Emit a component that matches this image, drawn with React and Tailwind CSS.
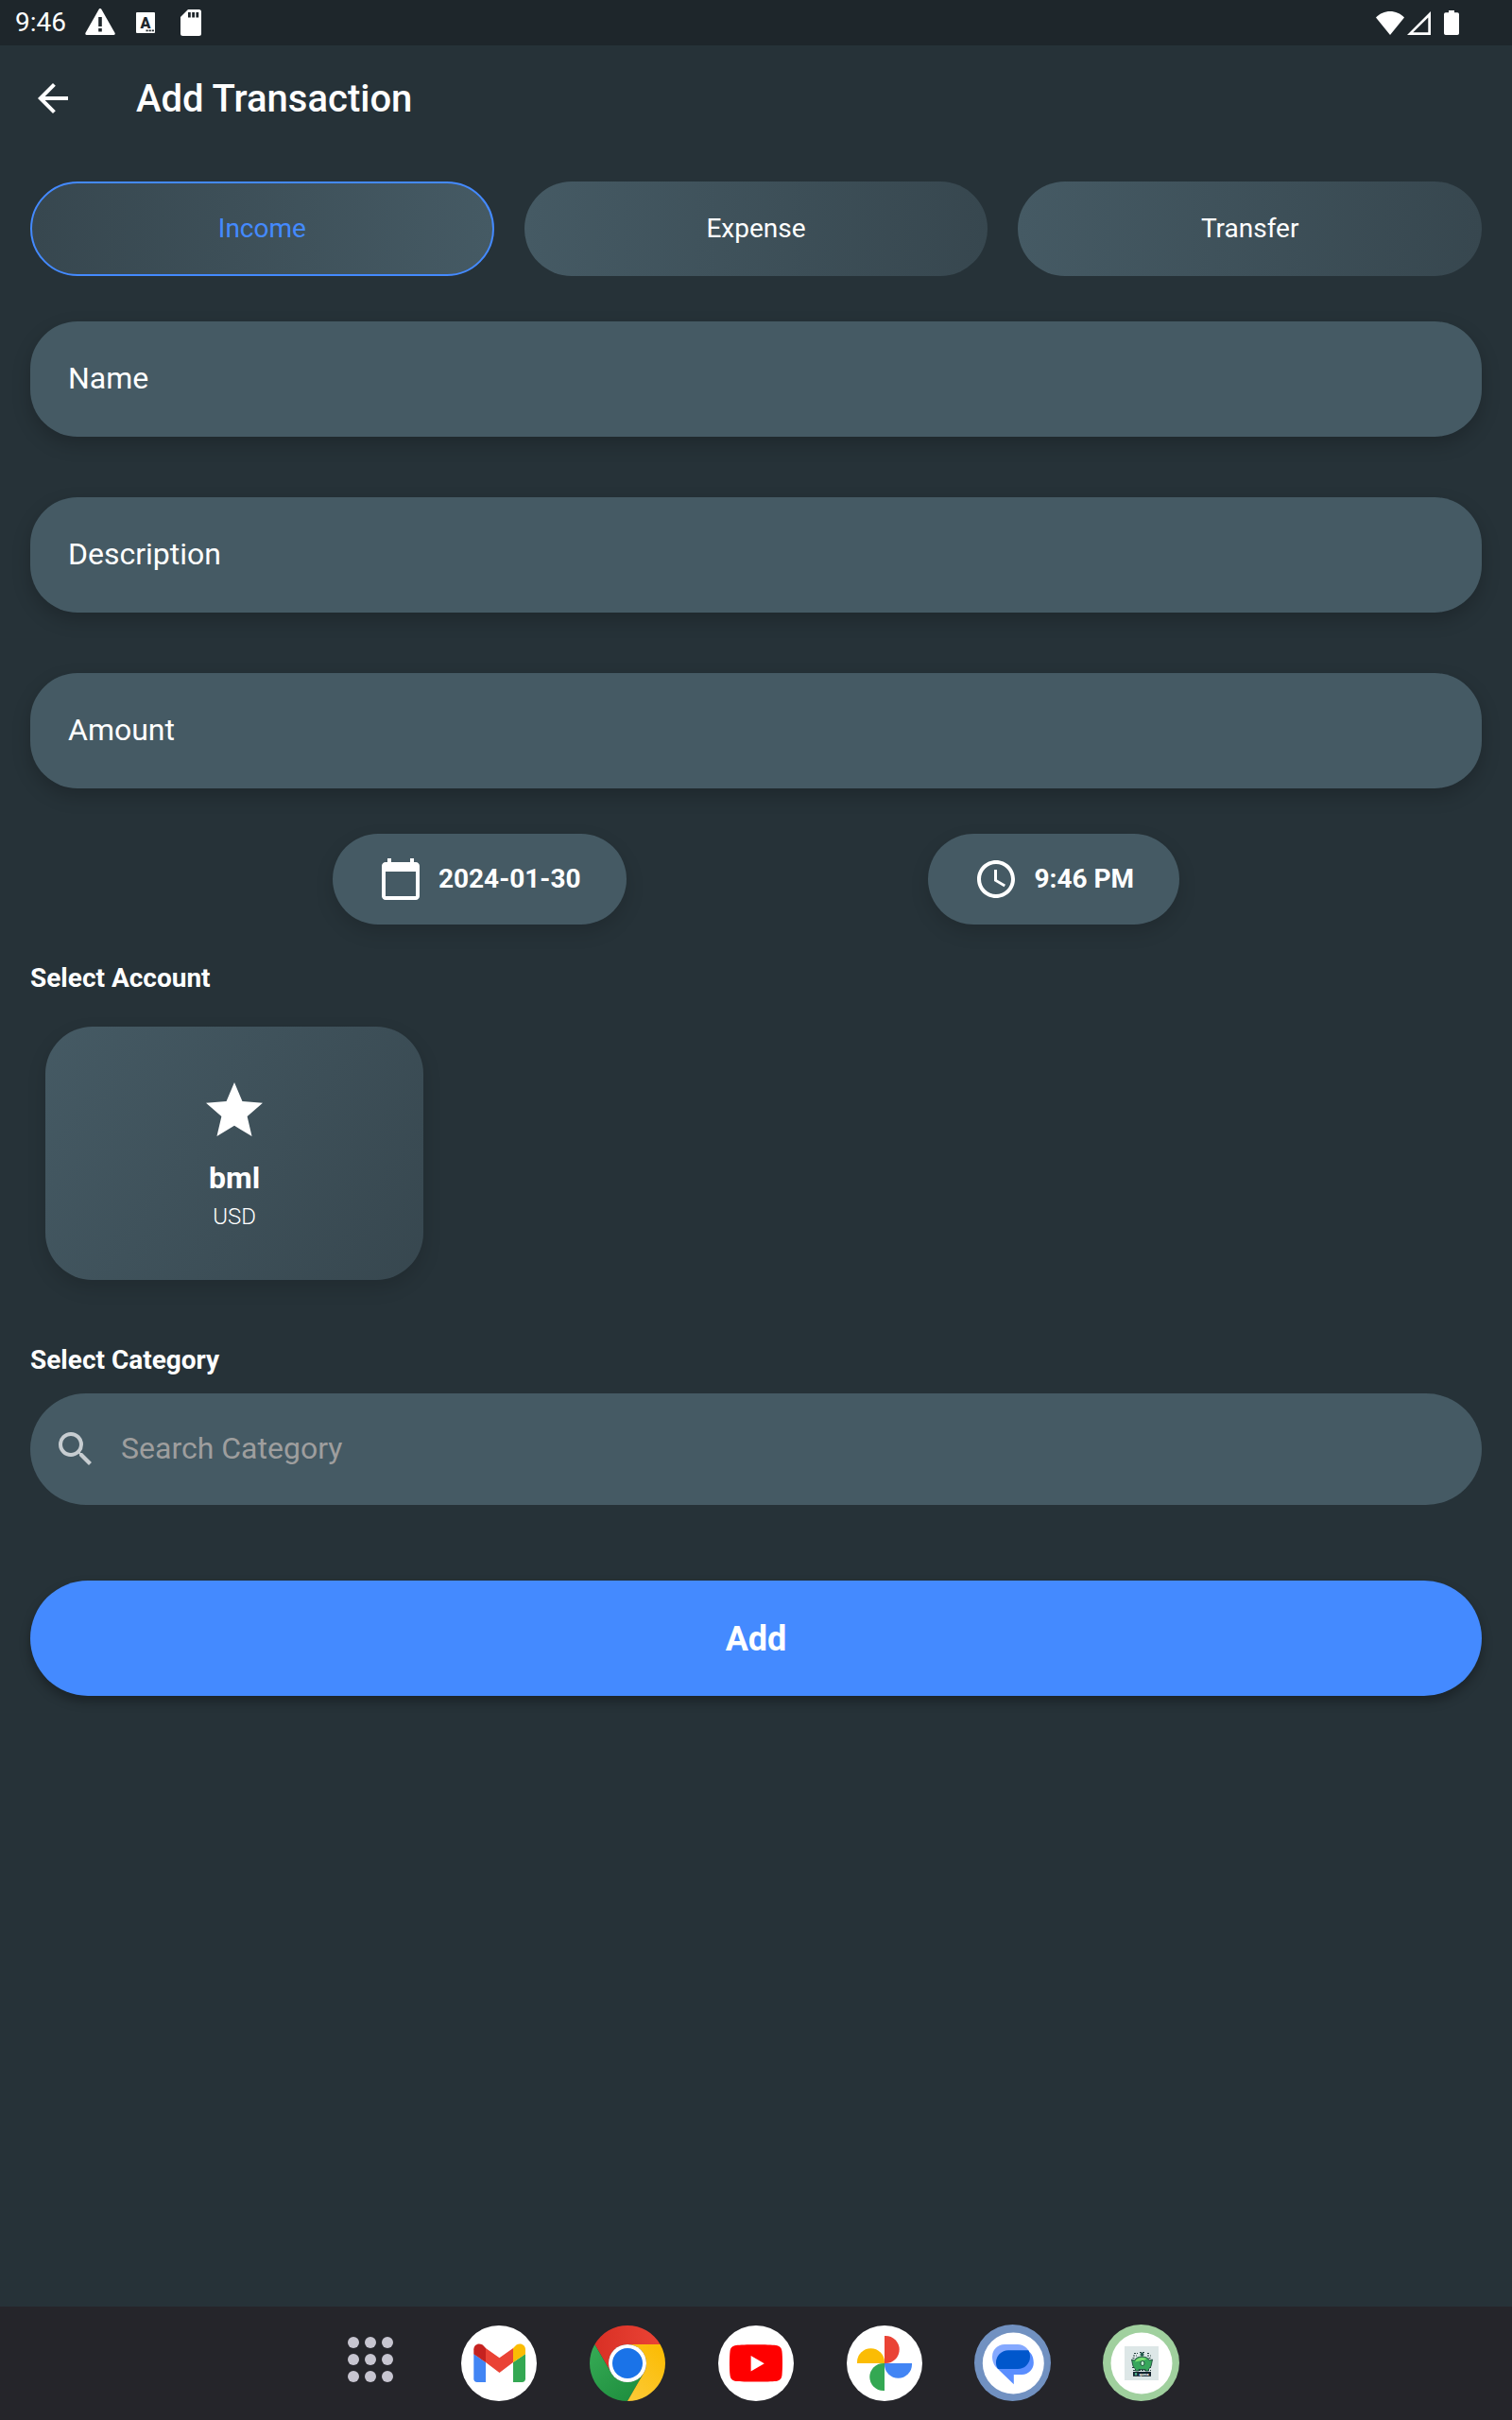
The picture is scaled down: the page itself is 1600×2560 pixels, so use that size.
import { MdArrowBack, MdCalendarToday, MdAccessTime, MdStar, MdSearch } from "react-icons/md";

const fieldShadow = "shadow-[0_8px_20px_rgba(0,0,0,0.2)]";
const softShadow = "shadow-[0_8px_20px_rgba(0,0,0,0.14)]";

function StatusBar() {
  return (
    <div className="flex h-12 items-center bg-[#1e262b] pl-4 pr-14">
      <span className="w-[74px] text-[28px] leading-[34px]">9:46</span>
      <svg className="h-[30px] w-8" viewBox="0 0 32 30" aria-hidden="true">
        <path d="M16 1.500 30.200 26.500H1.800z" fill="#fff" stroke="#fff" strokeWidth="3" strokeLinejoin="round" />
        <path d="M14.200 9h3.600v10h-3.600zM14.200 21h3.600v3.600h-3.600z" fill="#1e262b" />
      </svg>
      <svg className="ml-[22px] h-[22px] w-5" viewBox="0 0 20 22" aria-hidden="true">
        <rect width="20" height="22" rx="1" fill="#fff" />
        <text x="10" y="16.500" textAnchor="middle" fontSize="16" fontWeight="900" fill="#1e262b">A</text>
        <path d="M10.500 18.600h2.200v1.600h-2.200zM13.600 18.600h2.200v1.600h-2.200zM16.700 18.600h2.200v1.600h-2.200z" fill="#1e262b" />
      </svg>
      <svg className="ml-[27px] h-7 w-[22px]" viewBox="0 0 22 28" aria-hidden="true">
        <path d="M8 0h11.500A2.500 2.500 0 0 1 22 2.500v23a2.500 2.500 0 0 1-2.500 2.500h-17A2.500 2.500 0 0 1 0 25.500V8z" fill="#fff" />
        <path d="M8 3h2.800v5.500H8zM12.200 3H15v5.500h-2.800zM16.400 3h2.800v5.500h-2.800z" fill="#1e262b" />
      </svg>
      <div className="ml-auto flex items-center">
        <svg className="h-[25px] w-[30px]" viewBox="0 0 30 25" aria-hidden="true">
          <path d="M15 25 0 6.500C4 2.300 9.500 0 15 0s11 2.300 15 6.500z" fill="#fff" />
        </svg>
        <svg className="ml-[3px] h-[25px] w-[25px]" viewBox="0 0 25 25" aria-hidden="true">
          <path d="M25 0v25H0zM22.300 6.500 6.300 22.300h16z" fill="#fff" fillRule="evenodd" />
        </svg>
        <svg className="ml-[14px] h-[26px] w-4" viewBox="0 0 16 26" aria-hidden="true">
          <path d="M5 0h6v2.200h3.200A1.800 1.800 0 0 1 16 4v20.200a1.800 1.800 0 0 1-1.800 1.800H1.800A1.800 1.800 0 0 1 0 24.200V4a1.800 1.800 0 0 1 1.800-1.800H5z" fill="#fff" />
        </svg>
      </div>
    </div>
  );
}

function Tab({ label, active }) {
  return (
    <button
      type="button"
      aria-pressed={active}
      className={
        "flex h-[100px] items-center justify-center rounded-[50px] text-[28px] leading-[34px] " +
        (active
          ? "border-2 border-[#448aff] bg-linear-to-r from-[#37474f] to-[#455a64] bg-origin-border text-[#448aff]"
          : "bg-linear-to-r from-[#455a64] to-[#37474f] text-white")
      }
    >
      {label}
    </button>
  );
}

function Field({ label }) {
  return (
    <input
      type="text"
      aria-label={label}
      placeholder={label}
      className={"h-[122px] w-full rounded-[50px] bg-[#455a64] px-10 pb-0.5 text-[32px] text-white outline-none placeholder:text-white placeholder:opacity-100 " + fieldShadow}
    />
  );
}

function Chip({ icon: Icon, label }) {
  return (
    <button type="button" className={"flex h-24 items-center gap-4 rounded-[50px] bg-[#455a64] px-12 text-[28px] leading-[34px] font-bold " + softShadow}>
      <Icon className="size-12" />
      {label}
    </button>
  );
}

function DockItem({ label, children }) {
  return (
    <button type="button" aria-label={label} className="size-20">
      <svg className="size-20 overflow-visible" viewBox="0 0 80 80">{children}</svg>
    </button>
  );
}

function Dock() {
  return (
    <nav className="flex h-[120px] items-start justify-center gap-14 bg-[#25252a] pt-5">
      <button type="button" aria-label="All apps" className="flex h-[72px] w-20 items-center justify-center">
        <svg className="size-12" viewBox="0 0 48 48" fill="#c7c5d0">
          {[6, 24, 42].map((y) => [6, 24, 42].map((x) => <circle key={x + "-" + y} cx={x} cy={y} r="6" />))}
        </svg>
      </button>
      <DockItem label="Gmail">
        <circle cx="40" cy="40" r="40" fill="#fff" />
        <path d="M13.300 30 26 39v21h-9a3.700 3.700 0 0 1-3.700-3.700z" fill="#4285f4" />
        <path d="M68 30 55 39v21h9.300a3.700 3.700 0 0 0 3.700-3.700z" fill="#34a853" />
        <path d="M26 24 40.500 34.300 55 24v15L40.500 50 26 39z" fill="#ea4335" />
        <path d="M26 39 13.300 30.300v-5c0-5 5.300-7.600 9.400-4.700L26 24z" fill="#c5221f" />
        <path d="M55 39 68 30.300v-5c0-5-5.500-7.600-9.500-4.700L55 24z" fill="#fbbc04" />
      </DockItem>
      <DockItem label="Chrome">
        <defs>
          <linearGradient id="chromeRed" x1="0" x2="1"><stop stopColor="#d93025" /><stop offset="1" stopColor="#ea4335" /></linearGradient>
          <linearGradient id="chromeGreen" x1="0.8" y1="1" x2="0.1" y2="0.1"><stop stopColor="#1e8e3e" /><stop offset="1" stopColor="#34a853" /></linearGradient>
          <linearGradient id="chromeYellow" x1="0.2" y1="1" x2="0.8" y2="0"><stop stopColor="#fcc934" /><stop offset="1" stopColor="#fbbc04" /></linearGradient>
        </defs>
        <path d="M40 20h34.640A40 40 0 0 0 5.360 20L22.680 50A20 20 0 0 1 40 20z" fill="url(#chromeRed)" />
        <path d="M5.360 20 22.680 50A20 20 0 0 0 57.320 50L40 80A40 40 0 0 1 5.360 20z" fill="url(#chromeGreen)" />
        <path d="M57.320 50 40 80A40 40 0 0 0 74.640 20H40a20 20 0 0 1 17.320 30z" fill="url(#chromeYellow)" />
        <circle cx="40" cy="40" r="20" fill="#fff" />
        <circle cx="40" cy="40" r="16" fill="#1a73e8" />
      </DockItem>
      <DockItem label="YouTube">
        <circle cx="40" cy="40" r="40" fill="#fff" />
        <path d="M19 21c7-.9 35-.9 42 0 4 .5 6 2.500 6.500 6.500.7 6 .7 19 0 25-.5 4-2.500 6-6.500 6.500-7 .7-35 .7-42 0-4-.5-6-2.500-6.500-6.500-.7-6-.7-19 0-25 .5-4 2.500-6 6.500-6.500z" fill="#f00" />
        <path d="M34.600 32v16.400L48.800 40.200z" fill="#fff" />
      </DockItem>
      <DockItem label="Photos">
        <circle cx="40" cy="40" r="40" fill="#fff" />
        <path d="M40 11h1.200a14.500 14.500 0 0 1 0 29H40z" fill="#ea4335" />
        <path d="M11 40v-1.200a14.500 14.500 0 0 1 29 0V40z" fill="#fbbc04" />
        <path d="M40 40h29v1.200a14.500 14.500 0 0 1-29 0z" fill="#4285f4" />
        <path d="M40 40v29h-1.200a14.500 14.500 0 0 1 0-29z" fill="#34a853" />
      </DockItem>
      <DockItem label="Messages">
        <circle cx="39.500" cy="39.500" r="40.500" fill="#7191c1" />
        <circle cx="40.300" cy="40" r="32.500" fill="#fff" />
        <path d="M31 20h14a13 13 0 0 1 13 13v0a13 13 0 0 1-13 13H24c-4-3-6-8-6-13a13 13 0 0 1 13-13z" fill="#85a9ff" />
        <path d="M57 28c3 2 4.800 6 4.800 11.500A12.500 12.500 0 0 1 49.500 52h-8.700v10.300L25 47c-2-2-3-4.500-3-8z" fill="#5a8eff" />
        <path d="M35 26.300h21.300c1.300 2 1.700 4.200 1.700 6.700a13 13 0 0 1-13 13H24.200c-1.600-2-2.200-4.200-2.200-6.700a13 13 0 0 1 13-13z" fill="#0057cc" />
      </DockItem>
      <DockItem label="Equma">
        <circle cx="39.500" cy="39.500" r="40.500" fill="#a0d09e" />
        <circle cx="40" cy="40" r="32.500" fill="#fff" />
        <rect x="22" y="22" width="36" height="36" fill="#dde7e7" />
        <path d="M32 29.500h4m2-1h5m3 1h3M31 32h4m11 0h4M30.500 34.500h3m14 0h3M30 44.500h3m15 0h3M31 47.500h19" stroke="#26423f" strokeWidth="1.200" strokeDasharray="2 1" />
        <path d="m29.500 36 3 1c1.500-2.600 4-4 8-4s6.500 1.400 8 4l3-1-1 5c-.3 2.500-1.500 4-3 5v2h-3.500v-1.500h-7V48h-3.500v-2c-1.700-1.200-2.700-2.800-3-5z" fill="#38a75c" stroke="#12382f" strokeWidth=".8" />
        <path d="M33 38.500c1-3 4-4.500 7-4.500s4.500.6 5.500 1.500L42 37l-4 .5z" fill="#7be06f" />
        <ellipse cx="41" cy="40" rx="2" ry="2.600" fill="#bfeecf" stroke="#12382f" strokeWidth=".8" />
        <circle cx="40.500" cy="30.800" r="2" fill="#245c4d" />
        <rect x="31" y="49" width="19" height="4.800" fill="#13232e" />
        <text x="37.500" y="52.800" fontSize="4" fontWeight="700" fill="#fff">quma</text>
        <circle cx="34" cy="51.400" r="1.300" fill="#4fb48c" />
      </DockItem>
    </nav>
  );
}

export default function App() {
  return (
    <div className="flex min-h-screen flex-col bg-[#263238] font-[Roboto,sans-serif] text-white">
      <StatusBar />
      <header className="flex h-28 items-center gap-16 px-8">
        <button type="button" aria-label="Back">
          <MdArrowBack className="size-12" />
        </button>
        <h1 className="pt-0.5 text-[40px] leading-12 font-medium">Add Transaction</h1>
      </header>
      <main className="flex flex-1 flex-col px-8 pt-8">
        <div className="grid grid-cols-3 gap-8">
          <Tab label="Income" active />
          <Tab label="Expense" active={false} />
          <Tab label="Transfer" active={false} />
        </div>
        <div className="mt-12 flex flex-col gap-16">
          <Field label="Name" />
          <Field label="Description" />
          <Field label="Amount" />
        </div>
        <div className="mt-12 flex justify-evenly">
          <Chip icon={MdCalendarToday} label="2024-01-30" />
          <Chip icon={MdAccessTime} label="9:46 PM" />
        </div>
        <h2 className="mt-10 text-[28px] leading-[34px] font-bold">Select Account</h2>
        <button
          type="button"
          className={"mt-[34px] ml-4 flex h-[268px] w-[400px] flex-col items-center justify-center rounded-[50px] bg-[linear-gradient(124deg,#455a64,#37474f)] " + softShadow}
        >
          <MdStar className="size-[72px]" />
          <span className="mt-4 text-[32px] leading-[38px] font-bold">bml</span>
          <span className="mt-2 text-2xl leading-7 font-light">USD</span>
        </button>
        <h2 className="mt-17 text-[28px] leading-[34px] font-bold">Select Category</h2>
        <label className="mt-[18px] flex h-[118px] items-center gap-6 rounded-full bg-[#455a64] px-6">
          <MdSearch className="size-12 text-[#c7cdd1]" />
          <input
            type="search"
            aria-label="Search Category"
            placeholder="Search Category"
            className="min-w-0 flex-1 bg-transparent pb-0.5 text-[32px] outline-none placeholder:text-[#9e9e9e] placeholder:opacity-100"
          />
        </label>
        <button type="button" className="mt-20 h-[122px] rounded-full bg-[#448aff] pt-0.5 text-4xl font-bold shadow-[0_6px_12px_rgba(0,0,0,0.3)]">
          Add
        </button>
      </main>
      <Dock />
    </div>
  );
}
